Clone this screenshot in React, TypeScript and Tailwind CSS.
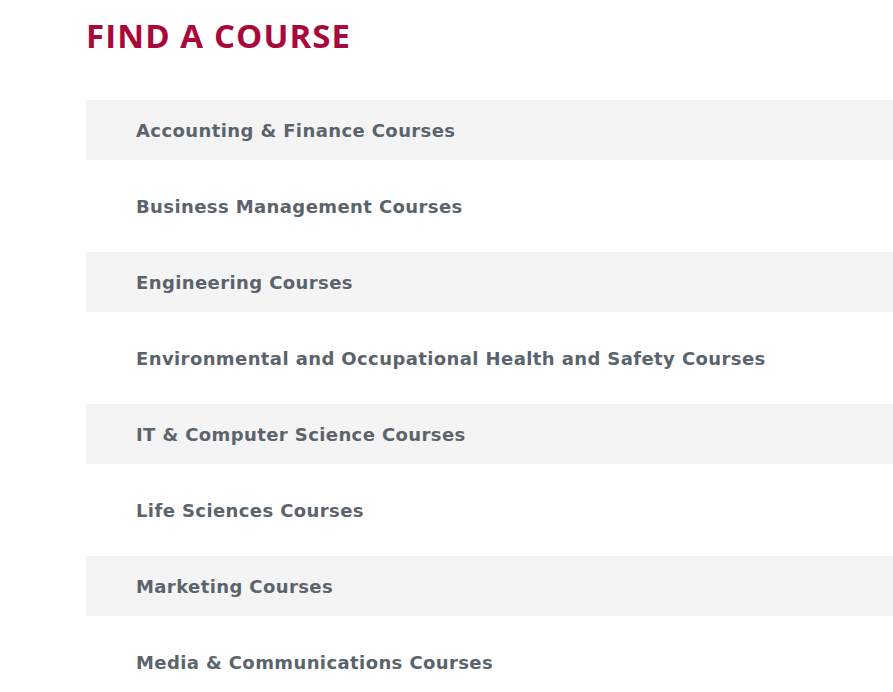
const courses = [
  'Accounting & Finance Courses',
  'Business Management Courses',
  'Engineering Courses',
  'Environmental and Occupational Health and Safety Courses',
  'IT & Computer Science Courses',
  'Life Sciences Courses',
  'Marketing Courses',
  'Media & Communications Courses',
];

export default function App() {
  return (
    <div className="min-h-screen bg-white overflow-hidden font-['Open_Sans',sans-serif]">
      <div className="pl-[86px] pt-[14px]">
        <h1 className="text-[33px] leading-[44px] font-bold text-[#a8093a] tracking-[1.1px]">
          FIND A COURSE
        </h1>
        <ul className="mt-[42px] flex flex-col gap-4 w-[900px]">
          {courses.map((c, i) => (
            <li
              key={c}
              className={`h-[60px] flex items-center pl-[50px] pt-[1px] text-[18px] tracking-[0.4px] font-bold text-[#5b646c] font-['DejaVu_Sans',sans-serif] ${
                i % 2 === 0 ? 'bg-[#f4f4f4]' : 'bg-white'
              }`}
            >
              {c}
            </li>
          ))}
        </ul>
      </div>
    </div>
  );
}
